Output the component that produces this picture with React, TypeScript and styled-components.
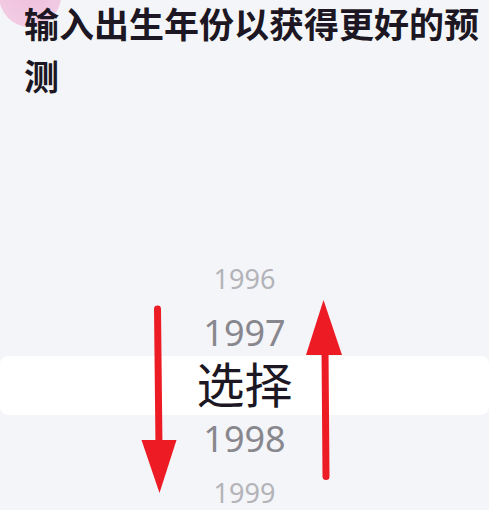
import React from "react";
import styled, { createGlobalStyle } from "styled-components";

const GlobalStyle = createGlobalStyle`
  html, body { margin: 0; padding: 0; background: #f4f5f9; }
  * { box-sizing: border-box; }
`;

const Page = styled.div`
  position: relative;
  width: 489px;
  height: 510px;
  overflow: hidden;
  background: #f4f5f9;
  display: flex;
  flex-direction: column;
`;

const Blob = styled.div`
  position: absolute;
  left: -1px;
  top: -35px;
  width: 62px;
  height: 62px;
  border-radius: 50%;
  background: radial-gradient(circle at 50% 40%, #eebddb 0%, #f2cbe3 70%, #f4d3e8 100%);
`;

const Title = styled.h1`
  position: relative;
  margin: -3px 0 0 0;
  padding: 0 4px 0 24px;
  font-family: "Noto Sans CJK SC", "Noto Sans", sans-serif;
  font-weight: 700;
  font-size: 35px;
  line-height: 52px;
  color: #1c1722;
`;

const Picker = styled.div`
  margin-top: 147px;
  display: flex;
  flex-direction: column;
`;

const Row = styled.div<{ $h: number; $tone: "far" | "near" | "sel" }>`
  height: ${(p) => p.$h}px;
  display: flex;
  align-items: center;
  justify-content: center;
  padding-bottom: ${(p) => (p.$tone === "sel" ? 8 : 0)}px;
  font-family: ${(p) => (p.$tone === "sel" ? '"Noto Sans CJK SC", sans-serif' : '"Noto Sans", sans-serif')};
  font-size: ${(p) => (p.$tone === "far" ? 27 : p.$tone === "near" ? 36 : 48)}px;
  color: ${(p) => (p.$tone === "far" ? "#b3b3b8" : p.$tone === "near" ? "#88878d" : "#1c1722")};
  background: ${(p) => (p.$tone === "sel" ? "#ffffff" : "transparent")};
  border-radius: ${(p) => (p.$tone === "sel" ? "8px" : "0")};
  line-height: 1;
`;

const Overlay = styled.svg`
  position: absolute;
  left: 0;
  top: 0;
  pointer-events: none;
`;

const rows: { label: string; h: number; tone: "far" | "near" | "sel" }[] = [
  { label: "1996", h: 61, tone: "far" },
  { label: "1997", h: 47, tone: "near" },
  { label: "选择", h: 59, tone: "sel" },
  { label: "1998", h: 47, tone: "near" },
  { label: "1999", h: 61, tone: "far" },
];

export default function App() {
  return (
    <>
      <GlobalStyle />
      <Page>
        <Blob />
        <Title>输入出生年份以获得更好的预测</Title>
        <Picker>
          {rows.map((r) => (
            <Row key={r.label} $h={r.h} $tone={r.tone}>
              {r.label}
            </Row>
          ))}
        </Picker>
        <Overlay width="489" height="510" viewBox="0 0 489 510">
          <line x1="157.5" y1="309" x2="159" y2="448" stroke="#ed1c24" strokeWidth="7" strokeLinecap="round" />
          <polygon points="141.5,440 176.5,440 159.5,493" fill="#ed1c24" />
          <line x1="325" y1="350" x2="326" y2="476.5" stroke="#ed1c24" strokeWidth="7" strokeLinecap="round" />
          <polygon points="306,355 342,355 323.5,300" fill="#ed1c24" />
        </Overlay>
      </Page>
    </>
  );
}
